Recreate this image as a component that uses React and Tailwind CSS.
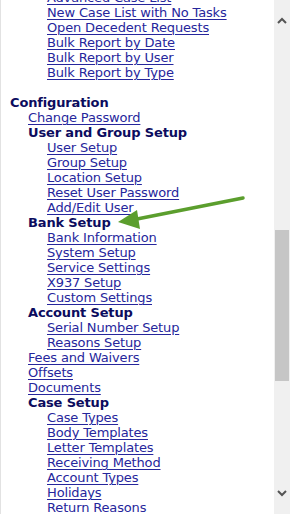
import React from 'react';

const LINK = 'text-[#26269c] underline underline-offset-2 decoration-1';
const HEAD = 'text-[#0c0c5e] font-bold';

const rows = [
  { t: 'Advanced Case List', l: 3, link: true },
  { t: 'New Case List with No Tasks', l: 3, link: true },
  { t: 'Open Decedent Requests', l: 3, link: true },
  { t: 'Bulk Report by Date', l: 3, link: true },
  { t: 'Bulk Report by User', l: 3, link: true },
  { t: 'Bulk Report by Type', l: 3, link: true },
  { t: '', l: 1 },
  { t: 'Configuration', l: 1 },
  { t: 'Change Password', l: 2, link: true },
  { t: 'User and Group Setup', l: 2 },
  { t: 'User Setup', l: 3, link: true },
  { t: 'Group Setup', l: 3, link: true },
  { t: 'Location Setup', l: 3, link: true },
  { t: 'Reset User Password', l: 3, link: true },
  { t: 'Add/Edit User', l: 3, link: true },
  { t: 'Bank Setup', l: 2 },
  { t: 'Bank Information', l: 3, link: true },
  { t: 'System Setup', l: 3, link: true },
  { t: 'Service Settings', l: 3, link: true },
  { t: 'X937 Setup', l: 3, link: true },
  { t: 'Custom Settings', l: 3, link: true },
  { t: 'Account Setup', l: 2 },
  { t: 'Serial Number Setup', l: 3, link: true },
  { t: 'Reasons Setup', l: 3, link: true },
  { t: 'Fees and Waivers', l: 2, link: true },
  { t: 'Offsets', l: 2, link: true },
  { t: 'Documents', l: 2, link: true },
  { t: 'Case Setup', l: 2 },
  { t: 'Case Types', l: 3, link: true },
  { t: 'Body Templates', l: 3, link: true },
  { t: 'Letter Templates', l: 3, link: true },
  { t: 'Receiving Method', l: 3, link: true },
  { t: 'Account Types', l: 3, link: true },
  { t: 'Holidays', l: 3, link: true },
  { t: 'Return Reasons', l: 3, link: true },
];

const indent = { 1: 'pl-[9px]', 2: 'pl-[27px]', 3: 'pl-[46px]' };

export default function App() {
  return (
    <div className="w-[290px] h-[514px] overflow-hidden bg-white flex font-['DejaVu_Sans',Verdana,sans-serif] text-[13px] leading-[15px] tracking-[-0.15px]">
      <div className="relative flex-1 border-l border-[#e2e2e2] overflow-hidden">
        <div className="mt-[-10px] whitespace-nowrap">
          {rows.map((r, i) => (
            <div key={i} className={`h-[15px] ${indent[r.l]}`}>
              {r.link ? (
                <a href="#" className={LINK}>{r.t}</a>
              ) : (
                <span className={HEAD}>{r.t}</span>
              )}
            </div>
          ))}
        </div>

        {/* green pointer */}
        <svg className="absolute left-[109px] top-[190px]" width="140" height="45" viewBox="0 0 140 45">
          <line x1="133" y1="8" x2="22" y2="30" stroke="#5b9e2d" strokeWidth="3.5" strokeLinecap="round" />
          <polygon points="8,32 27,20 30,39" fill="#5b9e2d" />
        </svg>
      </div>

      {/* scrollbar */}
      <div className="w-[16px] h-full bg-[#f0f0f0] flex flex-col items-center">
        <div className="h-[16px] mt-[12px] flex items-center justify-center">
          <svg width="10" height="7" viewBox="0 0 10 7">
            <path d="M1 6 L5 2 L9 6" stroke="#555" strokeWidth="2" fill="none" />
          </svg>
        </div>
        <div className="mt-[202px] w-[14px] h-[151px] bg-[#c6c6c6]" />
        <div className="flex-1" />
        <div className="h-[16px] mb-[13px] flex items-center justify-center">
          <svg width="10" height="7" viewBox="0 0 10 7">
            <path d="M1 1 L5 5 L9 1" stroke="#555" strokeWidth="2" fill="none" />
          </svg>
        </div>
      </div>
    </div>
  );
}
